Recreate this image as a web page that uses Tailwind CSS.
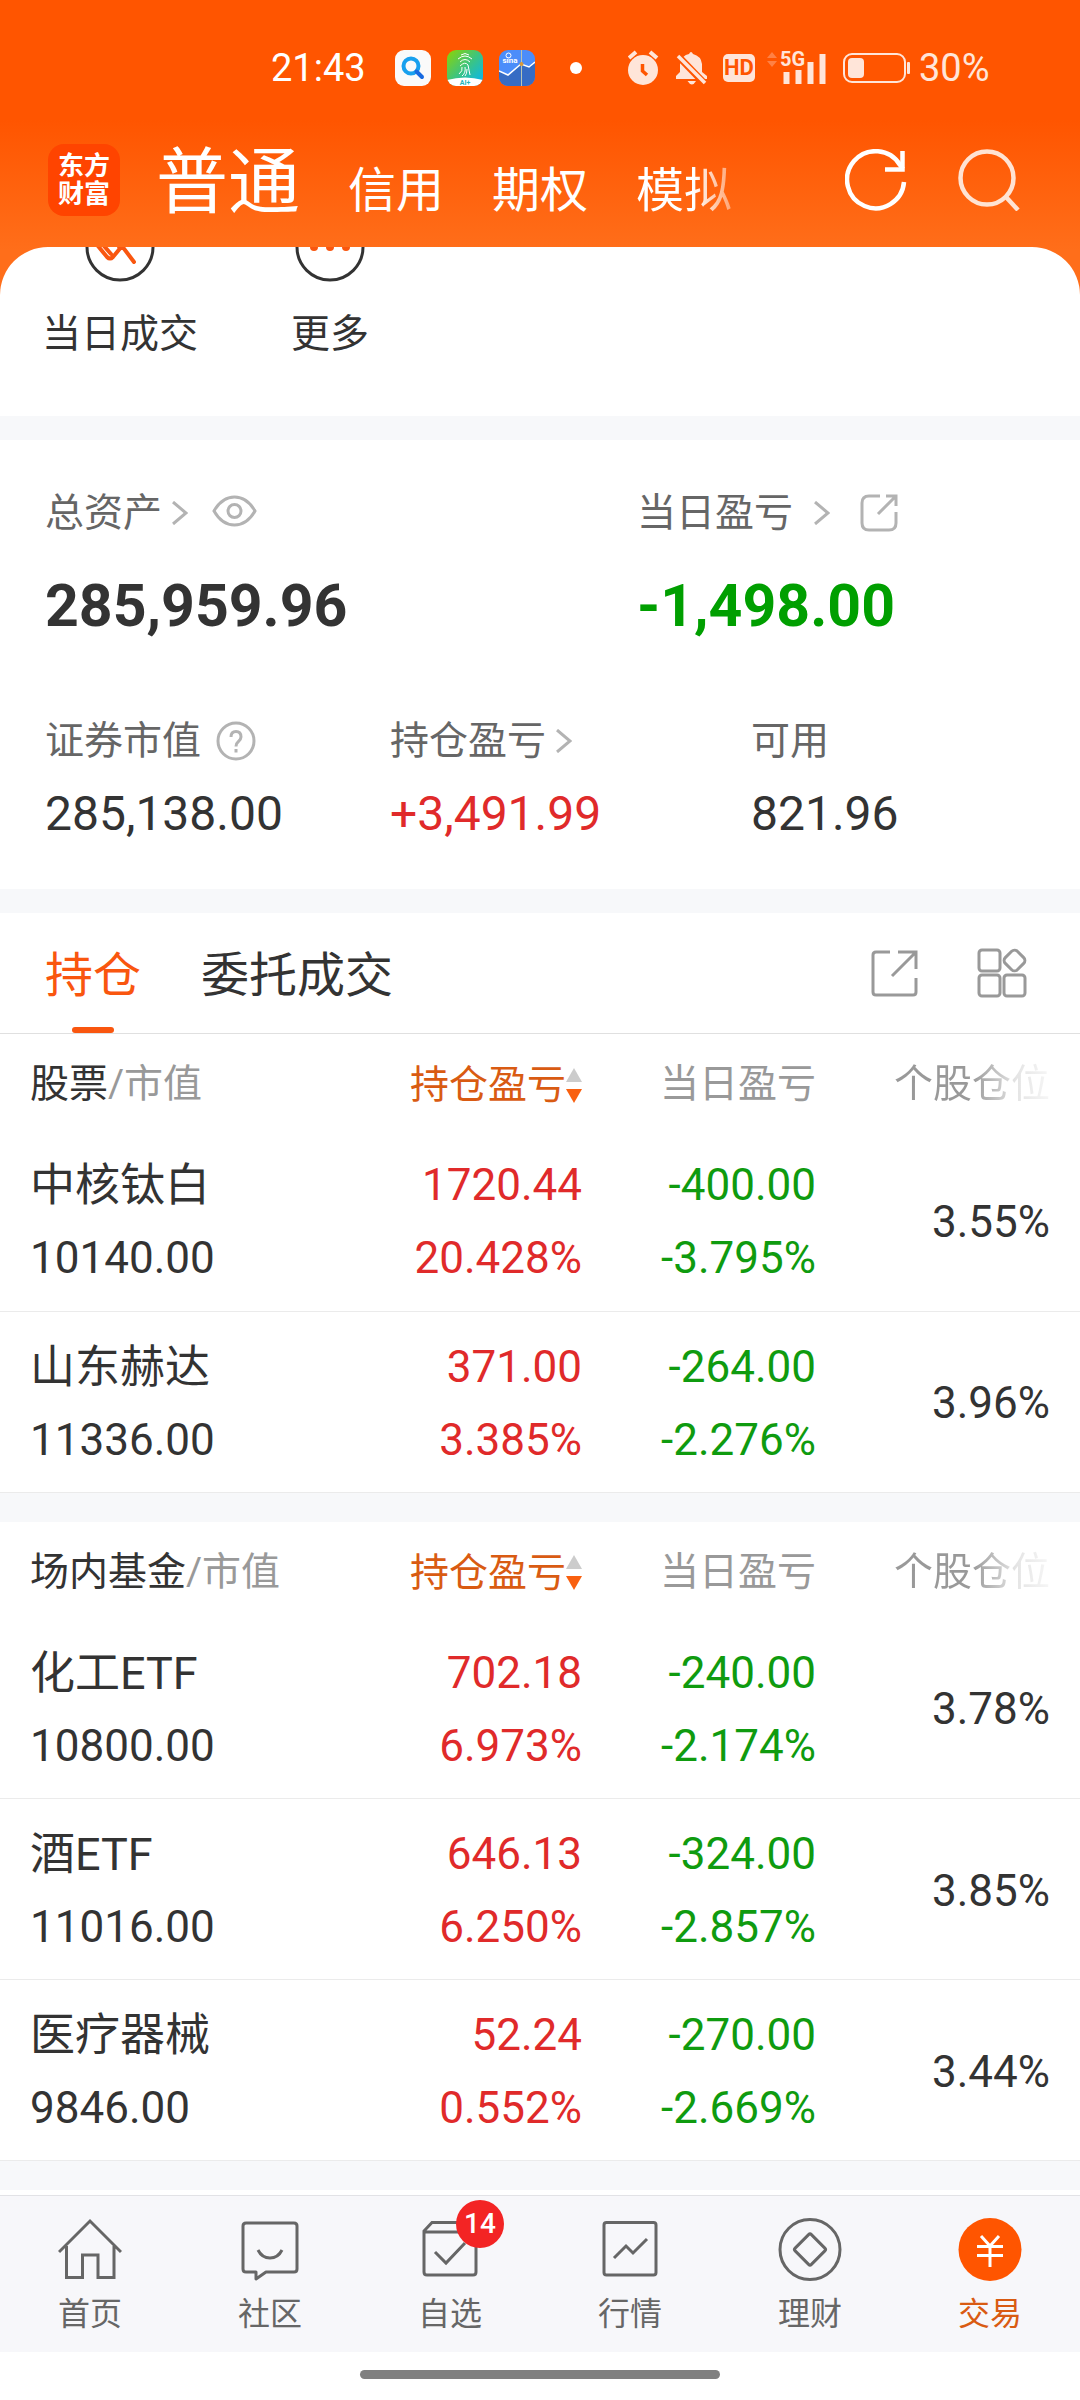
<!DOCTYPE html>
<html lang="zh-CN">
<head>
<meta charset="utf-8">
<meta name="viewport" content="width=device-width, initial-scale=1">
<title>普通交易 - 持仓</title>
<script src="https://cdn.jsdelivr.net/npm/@tailwindcss/browser@4"></script>
</head>
<body class="font-[Roboto,'Noto_Sans_CJK_SC',sans-serif] text-[#333333] bg-white">
<div class="flex min-h-screen flex-col bg-[linear-gradient(#ff5500_120px,#ff6e1a_250px)]">

  <!-- Status bar -->
  <div class="flex h-[136px] items-center pl-[271px] text-[38px] leading-none text-white">
    <time class="w-[124px]">21:43</time>
    <div class="flex gap-4">
      <svg class="size-9" viewBox="0 0 36 36"><rect width="36" height="36" rx="9" fill="#fafafa"/><circle cx="16" cy="16" r="7.500" fill="none" stroke="#18a0ee" stroke-width="4"/><path d="M21.500 21.500L27 27" stroke="#1769e0" stroke-width="4" stroke-linecap="round"/></svg>
      <svg class="size-9 overflow-visible" viewBox="0 0 36 36"><defs><linearGradient id="fp" x1="0" y1="0" x2="1" y2="1"><stop offset="0" stop-color="#8fd400"/><stop offset=".5" stop-color="#3cc481"/><stop offset="1" stop-color="#00b4ff"/></linearGradient><clipPath id="r"><rect width="36" height="36" rx="9"/></clipPath></defs><g clip-path="url(#r)"><rect width="36" height="36" fill="url(#fp)"/><path d="M0 30Q18 25 36 30V36H0z" fill="#fff"/></g><path d="M14 5Q18 2 22 5M11 9Q18 3 25 9M13 12Q18 7 23 12M13 16Q18 11 21 15L23 25M12 24Q16 21 15 17M15 26Q19 23 18 17M20 19Q20 24 18 26" fill="none" stroke="#fff" stroke-width="1"/><text x="18" y="35" font-size="7" font-weight="700" text-anchor="middle" fill="#26b5b8">AI+</text></svg>
      <svg class="size-9 overflow-visible" viewBox="0 0 36 36"><g clip-path="url(#r)"><rect width="36" height="36" fill="#4b8dfa"/><path d="M0 21L9 25L22 14L30 17L36 12V36H0z" fill="#366cc4"/><path d="M0 21L9 25L22 14L30 17L36 12" fill="none" stroke="#fff" stroke-width="1.500"/><path d="M22.500 0V36" stroke="#b9c6b4"/><circle cx="22.500" cy="14" r="2" fill="#d79a3c"/><circle cx="9.500" cy="5.500" r="2.500" fill="none" stroke="#fff"/></g><text x="11" y="13" font-size="8" font-weight="700" text-anchor="middle" fill="#fff">sina</text></svg>
    </div>
    <span class="ml-[35px] size-3 rounded-full bg-white"></span>
    <div class="ml-[46px] flex items-center text-[#ffe5d9]">
      <svg class="h-[36px] w-8" viewBox="0 0 32 36"><circle cx="15" cy="20" r="15" fill="currentColor"/><path d="M1 8L8 2M29 8L22 2" stroke="currentColor" stroke-width="4"/><path d="M14.500 14V21L19 25" fill="none" stroke="#ff5500" stroke-width="3.500"/></svg>
      <svg class="ml-4 h-[36px] w-8" viewBox="0 0 32 36"><path d="M0 29V26L4 22V14Q6 5 13 4Q15 0 17 4Q25 6 26 14V22L31 26V29z" fill="currentColor"/><path d="M11.500 31H20Q16 38 11.500 31z" fill="currentColor"/><path d="M0 4L29 34" stroke="#ff5500" stroke-width="7"/><path d="M2 6L29 33" stroke="currentColor" stroke-width="3.500"/></svg>
      <span class="ml-[15px] flex h-7 w-8 items-center justify-center rounded-[5px] bg-[#ffe5d9] text-[22px] font-bold leading-none text-[#ff5500]">HD</span>
      <svg class="ml-3 h-[36px] w-[60px] overflow-visible" viewBox="0 0 60 36"><path d="M0 8L5 2L10 8zM0 11L5 17L10 11z" fill="#ff8145"/><text x="13" y="16" font-size="20" font-weight="700" fill="currentColor">5G</text><path d="M19.500 22V34M31.500 20V34M43.500 12V34M55.500 4V34" stroke="currentColor" stroke-width="6"/></svg>
      <svg class="ml-4 h-[30px] w-[68px]" viewBox="0 0 68 30"><rect x="1" y="1" width="61" height="28" rx="8" fill="none" stroke="currentColor" stroke-width="2"/><rect x="5" y="5" width="16" height="20" rx="4" fill="currentColor"/><rect x="64" y="9" width="3" height="12" rx="1" fill="currentColor"/></svg>
      <span class="ml-2">30%</span>
    </div>
  </div>

  <!-- Account header -->
  <header class="flex h-[111px] items-center pb-6 pl-12 pr-[60px] text-white">
    <a href="#" class="flex size-[72px] flex-col items-center justify-center rounded-2xl bg-[#ff4400] text-[26px] font-bold leading-7 text-white">
      <span>东方</span><span>财富</span>
    </a>
    <nav class="ml-9 flex items-baseline gap-12 whitespace-nowrap pt-[7px] text-[48px] leading-none">
      <a href="#" class="text-[72px]">普通</a>
      <a href="#">信用</a>
      <a href="#">期权</a>
      <a href="#" class="bg-[linear-gradient(90deg,#fff_60%,#ffffff66)] bg-clip-text text-transparent">模拟</a>
    </nav>
    <button type="button" aria-label="刷新" class="ml-auto"><svg class="size-[62px]" viewBox="0 0 62 62" fill="none" stroke="#fff" stroke-width="4.500"><path d="M59 33A28.500 28.500 0 1 1 55 16L58 20"/><path d="M57.500 2V20.500H40"/></svg></button>
    <button type="button" aria-label="搜索" class="ml-[51px]"><svg class="size-[62px]" viewBox="0 0 62 62" fill="none" stroke="#ffe3d3" stroke-width="4.500"><circle cx="29" cy="29" r="26.500"/><path d="M48 48L60 61"/></svg></button>
  </header>

  <main class="flex-1 overflow-hidden rounded-t-[48px] bg-white">
    <!-- Shortcuts -->
    <section class="flex h-[169px] pl-[15px] text-[39px] leading-[50px]">
      <a href="#" class="flex w-[210px] flex-col items-center gap-[27px]">
        <svg class="h-[35px] w-[70px] shrink-0" viewBox="0 0 70 35" fill="none"><circle cx="35" cy="0" r="33" stroke="#333" stroke-width="3"/><path d="M13 -1L22 10Q25 13 28 10L37 -1L49 15M19 -1L26 7M37 0H34" stroke="#f9560f" stroke-width="4" stroke-linecap="round"/></svg>
        <span>当日成交</span>
      </a>
      <a href="#" class="flex w-[210px] flex-col items-center gap-[27px]">
        <svg class="h-[35px] w-[70px] shrink-0" viewBox="0 0 70 35"><circle cx="35" cy="0" r="33" fill="none" stroke="#333" stroke-width="3"/><g fill="#f9560f"><circle cx="19" cy="0" r="4"/><circle cx="35" cy="0" r="4"/><circle cx="51" cy="0" r="4"/></g></svg>
        <span>更多</span>
      </a>
    </section>

    <!-- Asset summary -->
    <section class="h-[497px] border-y-[24px] border-[#f7f8fa] px-[45px] pt-12">
      <div class="grid grid-cols-[592fr_398fr]">
        <div>
          <div class="flex h-[50px] items-center text-[39px] text-[#666666]">
            <a href="#" class="flex items-center gap-[10px]">总资产<svg class="h-6 w-4" viewBox="0 0 16 24" fill="none" stroke="#b3b3b3" stroke-width="3"><path d="M1 1L14 12L1 23"/></svg></a>
            <button type="button" aria-label="隐藏金额" class="mb-1 ml-6"><svg class="h-8 w-[45px]" viewBox="0 0 45 32" fill="none" stroke="#b3b3b3" stroke-width="3"><path d="M2 16Q10 2 22.500 2T43 16Q35 30 22.500 30T2 16z"/><circle cx="22.500" cy="16" r="6.500"/></svg></button>
          </div>
          <p class="mt-[33px] text-[59px] font-bold leading-[70px]">285,959.96</p>
        </div>
        <div>
          <div class="flex h-[50px] items-center text-[39px] text-[#666666]">
            <a href="#" class="flex items-center gap-[21px]">当日盈亏<svg class="h-6 w-4" viewBox="0 0 16 24" fill="none" stroke="#b3b3b3" stroke-width="3"><path d="M1 1L14 12L1 23"/></svg></a>
            <button type="button" aria-label="分享当日盈亏" class="ml-[30px]"><svg class="size-[38px]" viewBox="0 0 38 38" fill="none" stroke="#b3b3b3" stroke-width="3"><path d="M20 2H9Q2 2 2 9V29Q2 36 9 36H29Q36 36 36 29V18"/><path d="M26 2H36V12M36 2L18 20"/></svg></button>
          </div>
          <p class="mt-[33px] text-[59px] font-bold leading-[70px] text-[#009f00]">-1,498.00</p>
        </div>
      </div>
      <div class="mt-[75px] grid grid-cols-[345fr_361fr_284fr]">
        <div>
          <div class="flex h-[50px] items-center gap-[15px] text-[39px] text-[#666666]">证券市值<button type="button" aria-label="说明"><svg class="size-10" viewBox="0 0 40 40" fill="none" stroke="#b3b3b3" stroke-width="3"><circle cx="20" cy="20" r="18"/><path d="M15 16Q15 10.500 20 10.500T25 16Q25 18.500 22 21Q20 22.500 20 25.500"/><path d="M20 28V31.500"/></svg></button></div>
          <p class="mt-[20px] text-[48px] leading-[56px]">285,138.00</p>
        </div>
        <div>
          <a href="#" class="flex h-[50px] items-center gap-[10px] text-[39px] text-[#666666]">持仓盈亏<svg class="h-6 w-4" viewBox="0 0 16 24" fill="none" stroke="#b3b3b3" stroke-width="3"><path d="M1 1L14 12L1 23"/></svg></a>
          <p class="mt-[20px] text-[48px] leading-[56px] text-[#e02a2a]">+3,491.99</p>
        </div>
        <div>
          <div class="flex h-[50px] items-center text-[39px] text-[#666666]">可用</div>
          <p class="mt-[20px] text-[48px] leading-[56px]">821.96</p>
        </div>
      </div>
    </section>

    <!-- Tabs -->
    <div class="flex h-[121px] items-center border-b border-[#e0e0e0] pl-[45px] pr-[53px] text-[48px]">
      <a href="#" class="relative flex h-full items-center pt-1.5 text-[#f9560f]">持仓<span class="absolute bottom-0 left-1/2 h-[6px] w-[42px] -translate-x-1/2 rounded-full bg-[#f9560f]"></span></a>
      <a href="#" class="ml-[60px] pt-1.5">委托成交</a>
      <button type="button" aria-label="分享持仓" class="ml-auto"><svg class="size-[47px]" viewBox="0 0 47 47" fill="none" stroke="#999" stroke-width="3"><path d="M19 2H5Q2 2 2 5V42Q2 45 5 45H42Q45 45 45 42V28"/><path d="M27 2H45V19M45 2L21 26"/></svg></button>
      <button type="button" aria-label="更多功能" class="ml-[59px]"><svg class="size-[50px]" viewBox="0 0 50 50" fill="none" stroke="#999" stroke-width="3"><rect x="2" y="2" width="21" height="21" rx="3"/><rect x="2" y="27" width="21" height="21" rx="3"/><rect x="27" y="27" width="21" height="21" rx="3"/><rect x="29" y="4" width="17" height="17" rx="4" transform="rotate(45 37.500 12.500)"/></svg></button>
    </div>

    <!-- Stocks -->
    <table class="w-full table-fixed border-collapse text-right text-[44px] leading-[73px]">
      <thead>
        <tr class="h-[96px] text-[39px] leading-[50px] text-[#999999]">
          <th scope="col" class="pl-[30px] pt-1 text-left font-normal"><span class="text-[#333333]">股票</span>/市值</th>
          <th scope="col" class="w-[234px] pt-1 font-normal"><button type="button" class="inline-flex items-center align-middle text-[#d95b12]">持仓盈亏<svg class="h-[35px] w-4" viewBox="0 0 16 35"><path d="M8 0L16 14H0z" fill="#ccc"/><path d="M0 21H16L8 35z" fill="#f9600f"/></svg></button></th>
          <th scope="col" class="w-[234px] pt-1 font-normal">当日盈亏</th>
          <th scope="col" class="w-[264px] pr-[30px] pt-1 font-normal"><span class="bg-[linear-gradient(90deg,#999_50%,#e4e4e4_78%,#f6f6f6)] bg-clip-text text-transparent">个股仓位</span></th>
        </tr>
      </thead>
      <tbody>
        <tr class="h-[181px] border-b border-[#ebebeb]">
          <td class="pl-[30px] pt-1 text-left"><div class="text-[45px]">中核钛白</div><div>10140.00</div></td>
          <td class="pt-1 text-[#e02a2a]"><div>1720.44</div><div>20.428%</div></td>
          <td class="pt-1 text-[#0f9b0f]"><div>-400.00</div><div>-3.795%</div></td>
          <td class="pr-[30px] pt-1">3.55%</td>
        </tr>
        <tr class="h-[181px] border-b border-[#ebebeb]">
          <td class="pl-[30px] pt-1 text-left"><div class="text-[45px]">山东赫达</div><div>11336.00</div></td>
          <td class="pt-1 text-[#e02a2a]"><div>371.00</div><div>3.385%</div></td>
          <td class="pt-1 text-[#0f9b0f]"><div>-264.00</div><div>-2.276%</div></td>
          <td class="pr-[30px] pt-1">3.96%</td>
        </tr>
      </tbody>
    </table>
    <div class="h-[29px] bg-[#f7f8fa]"></div>

    <!-- Exchange-traded funds -->
    <table class="w-full table-fixed border-collapse text-right text-[44px] leading-[73px]">
      <thead>
        <tr class="h-[96px] text-[39px] leading-[50px] text-[#999999]">
          <th scope="col" class="pl-[30px] pt-1 text-left font-normal"><span class="text-[#333333]">场内基金</span>/市值</th>
          <th scope="col" class="w-[234px] pt-1 font-normal"><button type="button" class="inline-flex items-center align-middle text-[#d95b12]">持仓盈亏<svg class="h-[35px] w-4" viewBox="0 0 16 35"><path d="M8 0L16 14H0z" fill="#ccc"/><path d="M0 21H16L8 35z" fill="#f9600f"/></svg></button></th>
          <th scope="col" class="w-[234px] pt-1 font-normal">当日盈亏</th>
          <th scope="col" class="w-[264px] pr-[30px] pt-1 font-normal"><span class="bg-[linear-gradient(90deg,#999_50%,#e4e4e4_78%,#f6f6f6)] bg-clip-text text-transparent">个股仓位</span></th>
        </tr>
      </thead>
      <tbody>
        <tr class="h-[181px] border-b border-[#ebebeb]">
          <td class="pl-[30px] pt-1 text-left"><div class="text-[45px]">化工ETF</div><div>10800.00</div></td>
          <td class="pt-1 text-[#e02a2a]"><div>702.18</div><div>6.973%</div></td>
          <td class="pt-1 text-[#0f9b0f]"><div>-240.00</div><div>-2.174%</div></td>
          <td class="pr-[30px] pt-1">3.78%</td>
        </tr>
        <tr class="h-[181px] border-b border-[#ebebeb]">
          <td class="pl-[30px] pt-1 text-left"><div class="text-[45px]">酒ETF</div><div>11016.00</div></td>
          <td class="pt-1 text-[#e02a2a]"><div>646.13</div><div>6.250%</div></td>
          <td class="pt-1 text-[#0f9b0f]"><div>-324.00</div><div>-2.857%</div></td>
          <td class="pr-[30px] pt-1">3.85%</td>
        </tr>
        <tr class="h-[181px] border-b border-[#ebebeb]">
          <td class="pl-[30px] pt-1 text-left"><div class="text-[45px]">医疗器械</div><div>9846.00</div></td>
          <td class="pt-1 text-[#e02a2a]"><div>52.24</div><div>0.552%</div></td>
          <td class="pt-1 text-[#0f9b0f]"><div>-270.00</div><div>-2.669%</div></td>
          <td class="pr-[30px] pt-1">3.44%</td>
        </tr>
      </tbody>
    </table>
    <div class="h-[29px] bg-[#f7f8fa]"></div>
  </main>

  <!-- Bottom navigation -->
  <footer class="bg-white pt-1">
    <nav class="grid h-[157px] grid-cols-6 border-t border-[#e2e2e6] bg-[#f7f7fa] pt-[21px] text-center text-[32px] leading-10 text-[#666666]">
      <a href="#" class="flex flex-col items-center gap-[13px]">
        <svg class="size-16" viewBox="0 0 64 64" fill="none" stroke="#666" stroke-width="3"><path d="M1 35L32 4L63 35M8.500 29V60.500H24.500V38H40V60.500H56V29"/></svg>首页</a>
      <a href="#" class="flex flex-col items-center gap-[13px]">
        <svg class="size-16" viewBox="0 0 64 64" fill="none" stroke="#666" stroke-width="3" stroke-linejoin="round"><path d="M8 6H56Q59 6 59 9V52Q59 55 56 55H28L18 62V55H8Q5 55 5 52V9Q5 6 8 6z"/><path d="M20 33Q24 41 32 41T44 33"/></svg>社区</a>
      <a href="#" class="relative flex flex-col items-center gap-[13px]">
        <svg class="size-16" viewBox="0 0 64 64" fill="none" stroke="#666" stroke-width="3"><path d="M6 15H58V55Q58 58 55 58H9Q6 58 6 55V14L14 5.500H50L58 14M17 35L28 46L47 26"/></svg>自选
        <span class="absolute left-24 top-[-17px] flex size-12 items-center justify-center rounded-full bg-[#f32424] text-[28px] font-medium text-white">14</span></a>
      <a href="#" class="flex flex-col items-center gap-[13px]">
        <svg class="size-16" viewBox="0 0 64 64" fill="none" stroke="#666" stroke-width="3"><rect x="6" y="5.500" width="52" height="52.500" rx="2.500"/><path d="M16 41L28 29L35 36L49 22"/></svg>行情</a>
      <a href="#" class="flex flex-col items-center gap-[13px]">
        <svg class="size-16" viewBox="0 0 64 64" fill="none" stroke="#666" stroke-width="3"><circle cx="32" cy="32.500" r="30"/><rect x="20.500" y="21" width="23" height="23" rx="2" transform="rotate(45 32 32.500)"/></svg>理财</a>
      <a href="#" class="flex flex-col items-center gap-[13px] text-[#d95b12]">
        <svg class="size-16" viewBox="0 0 64 64" fill="none" stroke="#fff" stroke-width="3"><circle cx="32" cy="32.500" r="31.500" fill="#ff5500" stroke="none"/><path d="M23 19L32 29L41 19M32 28V50M19 29.500H45M19 38.500H45"/></svg>交易</a>
    </nav>
    <div class="flex h-12 items-start justify-center pt-[18px]"><span class="h-[9px] w-1/3 rounded-full bg-[#808080]"></span></div>
  </footer>
</div>
</body>
</html>
